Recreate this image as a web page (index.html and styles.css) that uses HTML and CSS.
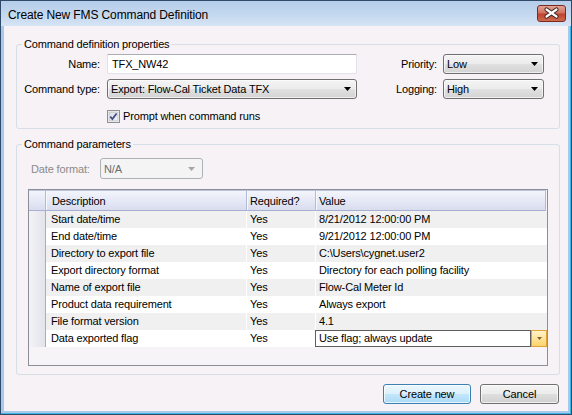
FILE: index.html
```html
<!DOCTYPE html>
<html>
<head>
<meta charset="utf-8">
<link rel="stylesheet" href="styles.css">
</head>
<body>
<div class="window">
  <div class="titlebar">
    <span class="title">Create New FMS Command Definition</span>
    <div class="close">
      <svg width="29" height="17" viewBox="0 0 29 17">
        <path d="M9.5 4.5 L19.5 11.5 M19.5 4.5 L9.5 11.5" stroke="#3a2424" stroke-width="4.2" stroke-linecap="round"/>
        <path d="M9.5 4.5 L19.5 11.5 M19.5 4.5 L9.5 11.5" stroke="#ffffff" stroke-width="2.2" stroke-linecap="round"/>
      </svg>
    </div>
  </div>
  <div class="frame">
    <div class="client">
      <fieldset class="group g1">
        <legend>Command definition properties</legend>
        <div class="props">
          <span class="lbl">Name:</span>
          <div class="textbox">TFX_NW42</div>
          <span class="lbl">Priority:</span>
          <div class="combo"><span>Low</span><svg class="arrow" width="7" height="4" viewBox="0 0 7 4"><path d="M0 0H7L3.5 4Z" fill="#000"/></svg></div>
          <span class="lbl">Command type:</span>
          <div class="combo"><span>Export: Flow-Cal Ticket Data TFX</span><svg class="arrow" width="7" height="4" viewBox="0 0 7 4"><path d="M0 0H7L3.5 4Z" fill="#000"/></svg></div>
          <span class="lbl">Logging:</span>
          <div class="combo"><span>High</span><svg class="arrow" width="7" height="4" viewBox="0 0 7 4"><path d="M0 0H7L3.5 4Z" fill="#000"/></svg></div>
          <div class="check-row">
            <svg class="checkbox" width="13" height="13" viewBox="0 0 13 13">
              <defs>
                <linearGradient id="cbg" x1="0" y1="0" x2="1" y2="1">
                  <stop offset="0" stop-color="#d8dbe1"/>
                  <stop offset="1" stop-color="#f4f5f7"/>
                </linearGradient>
              </defs>
              <rect x="0.5" y="0.5" width="12" height="12" fill="#fff" stroke="#8e8f8f"/>
              <rect x="2" y="2" width="9" height="9" fill="url(#cbg)" stroke="#b9bcc3" stroke-width="0.8"/>
              <path d="M3.3 6.6 L5.4 9.1 L9.6 3.4" fill="none" stroke="#3d4f86" stroke-width="1.7"/>
            </svg>
            <span>Prompt when command runs</span>
          </div>
        </div>
      </fieldset>
      <fieldset class="group g2">
        <legend>Command parameters</legend>
        <div class="date-row">
          <span class="lbl-dis">Date format:</span>
          <div class="combo disabled"><span>N/A</span><svg class="arrow" width="7" height="4" viewBox="0 0 7 4"><path d="M0 0H7L3.5 4Z" fill="#a6a6a6"/></svg></div>
        </div>
        <div class="datagrid">
          <div class="dg-row dg-head">
            <div class="rh"></div>
            <div class="c">Description</div>
            <div class="c">Required?</div>
            <div class="c">Value</div>
          </div>
          <div class="dg-row alt"><div class="rh"></div><div class="c">Start date/time</div><div class="c">Yes</div><div class="c">8/21/2012 12:00:00 PM</div></div>
          <div class="dg-row"><div class="rh"></div><div class="c">End date/time</div><div class="c">Yes</div><div class="c">9/21/2012 12:00:00 PM</div></div>
          <div class="dg-row alt"><div class="rh"></div><div class="c">Directory to export file</div><div class="c">Yes</div><div class="c">C:\Users\cygnet.user2</div></div>
          <div class="dg-row"><div class="rh"></div><div class="c">Export directory format</div><div class="c">Yes</div><div class="c">Directory for each polling facility</div></div>
          <div class="dg-row alt"><div class="rh"></div><div class="c">Name of export file</div><div class="c">Yes</div><div class="c">Flow-Cal Meter Id</div></div>
          <div class="dg-row"><div class="rh"></div><div class="c">Product data requirement</div><div class="c">Yes</div><div class="c">Always export</div></div>
          <div class="dg-row alt"><div class="rh"></div><div class="c">File format version</div><div class="c">Yes</div><div class="c">4.1</div></div>
          <div class="dg-row"><div class="rh"></div><div class="c">Data exported flag</div><div class="c">Yes</div>
            <div class="c editcell">
              <div class="edit-box">Use flag; always update</div>
              <div class="edit-btn"><svg width="5" height="3" viewBox="0 0 5 3"><path d="M0 0H5L2.5 3Z" fill="#7a6638"/></svg></div>
            </div>
          </div>
        </div>
      </fieldset>
      <div class="buttons">
        <div class="btn primary">Create new</div>
        <div class="btn cancel">Cancel</div>
      </div>
    </div>
  </div>
</div>
</body>
</html>
```

FILE: styles.css
```css
html, body {
  margin: 0;
  padding: 0;
  width: 572px;
  height: 415px;
  overflow: hidden;
  background: #ffffff;
}

.window {
  box-sizing: border-box;
  width: 572px;
  height: 415px;
  border: 1px solid #2f4b69;
  display: flex;
  flex-direction: column;
  background: #a9c9ea;
  font-family: "Liberation Sans", Arial, sans-serif;
  font-size: 11px;
  letter-spacing: -0.15px;
  color: #000;
}

.titlebar {
  height: 25px;
  flex: none;
  display: flex;
  align-items: flex-start;
  background: linear-gradient(#b5cde9, #c4d8ef 55%, #d6e4f4);
}

.title {
  font-size: 12px;
  letter-spacing: -0.12px;
  line-height: 12px;
  margin: 8px 0 0 7px;
  color: #000;
}

.close {
  margin: 4px 5px 0 auto;
  width: 29px;
  height: 17px;
  box-sizing: border-box;
  border: 1px solid #7b2a1f;
  border-radius: 3px;
  background: linear-gradient(#e3a393, #d2735f 45%, #c0442d 55%, #cf6a4f);
  display: flex;
  align-items: center;
  justify-content: center;
  overflow: hidden;
}

.close svg {
  display: block;
  margin: -1px;
}

.frame {
  flex: 1;
  display: flex;
  padding: 0 3px 3px 3px;
  box-shadow: inset 0 -1px 0 #3cb4e6, inset -1px 0 0 #3cb4e6;
}

.client {
  flex: 1;
  background: #f6f2f6;
  display: flex;
  flex-direction: column;
}

.group {
  margin: 0 8px 0 12px;
  padding: 0;
  min-width: 0;
  border: 1px solid #d5dfe5;
  border-radius: 3px;
}

.group legend {
  margin-left: 5px;
  padding: 0 2px;
  line-height: 13px;
  font-size: 11px;
}

.g1 {
  margin-top: 12px;
}

.g2 {
  margin-top: 9px;
}

.props {
  display: grid;
  grid-template-columns: 90px 250px 1fr 101px;
  grid-template-rows: 20px 20px auto;
  row-gap: 5px;
  padding: 3px 15px 5px 0;
}

.lbl {
  text-align: right;
  padding-right: 7px;
  line-height: 20px;
  white-space: nowrap;
}

.props .lbl:nth-of-type(2),
.props .lbl:nth-of-type(4) {
  padding-right: 6px;
}

.textbox {
  box-sizing: border-box;
  height: 20px;
  background: #fff;
  border: 1px solid #e2e3ea;
  border-top-color: #abadb3;
  padding-left: 4px;
  line-height: 18px;
}

.combo {
  box-sizing: border-box;
  height: 20px;
  border: 1px solid #707070;
  border-radius: 3px;
  background: linear-gradient(#f4f4f4, #ececec 48%, #e0e0e0 52%, #d3d3d3);
  display: flex;
  align-items: center;
  padding: 0 5px 0 3px;
  box-shadow: inset 0 0 0 1px rgba(255,255,255,0.6);
}

.combo span {
  flex: 1;
  white-space: nowrap;
  overflow: hidden;
}

.combo .arrow {
  flex: none;
  display: block;
}

.check-row {
  grid-column: 2 / 5;
  margin-top: 5px;
  display: flex;
  align-items: center;
  gap: 3px;
  height: 14px;
}

.checkbox {
  display: block;
  flex: none;
}

.date-row {
  display: flex;
  align-items: center;
  padding: 7px 0 0 14px;
}

.lbl-dis {
  width: 69px;
  color: #8b8b8b;
  white-space: nowrap;
}

.combo.disabled {
  width: 103px;
  height: 21px;
  border-color: #adb2b5;
  background: #f4f4f4;
  color: #6d6d6d;
  padding: 0 7px 0 3px;
  box-shadow: none;
}

.datagrid {
  box-sizing: border-box;
  height: 177px;
  margin: 10px 11px 8px 11px;
  border: 1px solid #8c9096;
  background: #f7f4f8;
  display: flex;
  flex-direction: column;
}

.dg-row {
  display: grid;
  grid-template-columns: 17px 201px 69px 1fr;
  height: 17px;
  line-height: 17px;
  background: #fff;
  flex: none;
}

.dg-row.alt {
  background: #f0f0f0;
}

.dg-row .c {
  box-sizing: border-box;
  border-right: 1px solid #fff;
  padding-left: 3px;
  white-space: nowrap;
  overflow: hidden;
}

.dg-row .c:nth-child(2) {
  padding-left: 5px;
}

.dg-row .c:last-child {
  border-right: none;
  padding-left: 3px;
}

.rh {
  box-sizing: border-box;
  background: linear-gradient(to right, #f3f3f7, #e3e3eb);
  border-right: 1px solid #a9adc2;
}

.dg-head {
  height: 21px;
  line-height: 21px;
  background: linear-gradient(#f3f5fc, #e6e9f6 50%, #d8dcee);
  border-top: 1px solid #bcc4e0;
  border-bottom: 1px solid #a7b0d2;
  box-sizing: border-box;
  margin-right: 1px;
}

.dg-head .rh {
  background: transparent;
  border-right: 1px solid #b3bad6;
}

.dg-head .c {
  border-right: 1px solid #b3bad6;
  box-shadow: inset 1px 0 0 #f8f9fd;
}

.dg-head .c:nth-child(2) {
  padding-left: 6px;
}

.dg-head .c:last-child {
  border-right: 1px solid #b3bad6;
}

.editcell {
  display: flex;
  margin-left: -1px;
  padding-left: 0 !important;
}

.edit-box {
  flex: 1;
  box-sizing: border-box;
  height: 17px;
  border: 1px solid #5e5e5e;
  background: #fff;
  padding-left: 3px;
  line-height: 15px;
}

.edit-btn {
  box-sizing: border-box;
  width: 16px;
  height: 17px;
  border: 1px solid #e0a23a;
  background: linear-gradient(#fff3c9, #fee39a 50%, #fdd46c);
  display: flex;
  align-items: center;
  justify-content: center;
}

.edit-btn svg {
  display: block;
}

.buttons {
  display: flex;
  justify-content: flex-end;
  gap: 9px;
  margin: 9px 9px 0 0;
}

.btn {
  box-sizing: border-box;
  height: 20px;
  line-height: 18px;
  text-align: center;
  border-radius: 3px;
  font-size: 11px;
}

.btn.primary {
  width: 88px;
  border: 1px solid #3c7fb1;
  background: linear-gradient(#ecf7fd, #dcf1fc 48%, #c2e7fc 52%, #abdaf5);
  box-shadow: inset 0 0 0 1px rgba(255,255,255,0.7);
}

.btn.cancel {
  width: 79px;
  border: 1px solid #707070;
  background: linear-gradient(#f4f4f4, #ececec 48%, #dedede 52%, #d0d0d0);
  box-shadow: inset 0 0 0 1px rgba(255,255,255,0.7);
}
```
